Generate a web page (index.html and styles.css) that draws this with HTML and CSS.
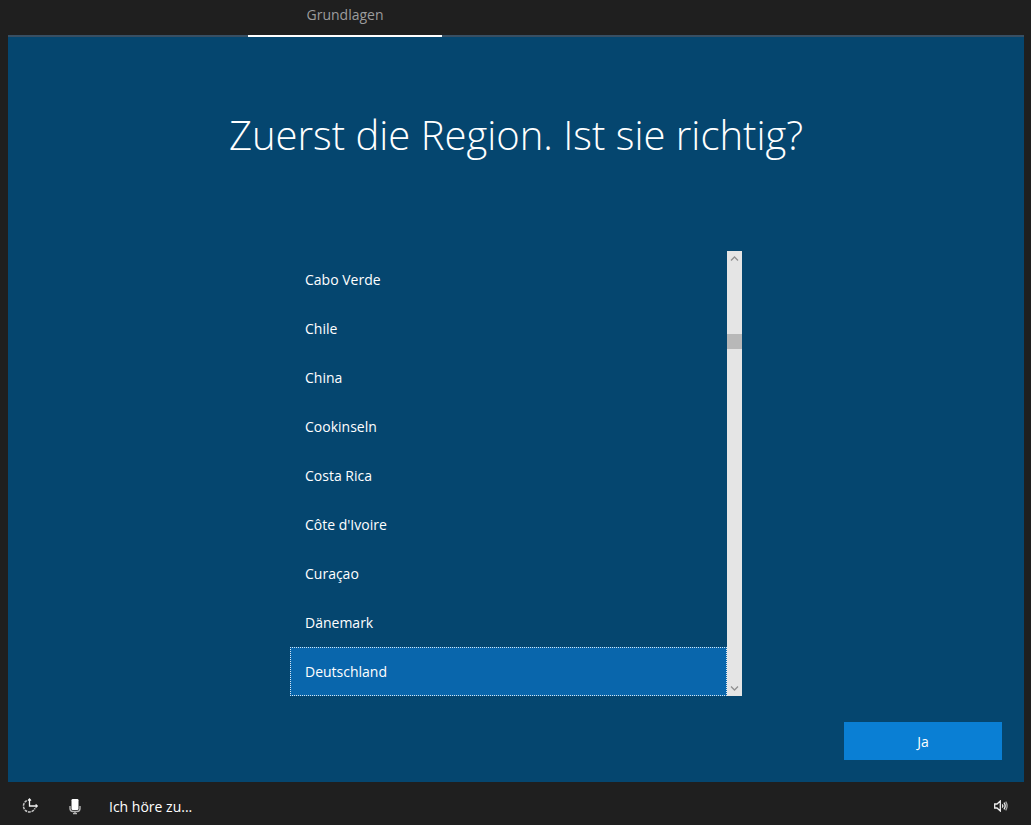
FILE: index.html
```html
<!DOCTYPE html>
<html lang="de">
<head>
<meta charset="utf-8">
<meta name="viewport" content="width=device-width, initial-scale=1">
<title>Grundlagen</title>
<link rel="stylesheet" href="styles.css">
</head>
<body>
<div class="setup">
  <header class="steps">
    <a class="step" href="#grundlagen" aria-current="step">Grundlagen</a>
  </header>
  <main class="panel" id="grundlagen">
    <h1 class="title">Zuerst die Region. Ist sie richtig?</h1>
    <div class="picker">
      <div class="regions" role="listbox" aria-label="Region">
        <button class="region" type="button" role="option">Cabo Verde</button>
        <button class="region" type="button" role="option">Chile</button>
        <button class="region" type="button" role="option">China</button>
        <button class="region" type="button" role="option">Cookinseln</button>
        <button class="region" type="button" role="option">Costa Rica</button>
        <button class="region" type="button" role="option">Côte d'Ivoire</button>
        <button class="region" type="button" role="option">Curaçao</button>
        <button class="region" type="button" role="option">Dänemark</button>
        <button class="region region-selected" type="button" role="option" aria-selected="true">Deutschland</button>
      </div>
      <div class="scrollbar">
        <button class="scroll-button" type="button" aria-label="Nach oben">
          <svg width="9" height="5" viewBox="0 0 9 5"><path d="M1 4.5 4.500 1 8 4.500"/></svg>
        </button>
        <div class="track"><div class="thumb"></div></div>
        <button class="scroll-button" type="button" aria-label="Nach unten">
          <svg width="9" height="5" viewBox="0 0 9 5"><path d="M1 .5 4.500 4 8 .5"/></svg>
        </button>
      </div>
    </div>
    <div class="actions">
      <button class="confirm" type="button">Ja</button>
    </div>
  </main>
  <footer class="bar">
    <button class="tool" type="button" aria-label="Erleichterte Bedienung">
      <svg width="18" height="16" viewBox="0 0 18 16" fill="none" stroke="#f2f2f2" stroke-width="1.300">
        <path d="M5.800 2.600A6 6 0 1 0 14 10.300" stroke="#c4c4c4" stroke-width="1.500" stroke-dasharray="2.800 .8"/>
        <path d="M8.500 1v7H16"/>
        <path d="M7 2.600 8.500 1 10 2.600M14.600 6.500 16.200 8l-1.600 1.500"/>
      </svg>
    </button>
    <button class="tool" type="button" aria-label="Mikrofon">
      <svg width="12" height="17" viewBox="0 0 12 17">
        <rect x="2.500" y="1" width="7" height="11" rx="1.200" fill="#fff"/>
        <path d="M1 8v2.500a3 3 0 0 0 3 3h4a3 3 0 0 0 3-3V8M6 13.500V16M4 15.600h4" fill="none" stroke="#b5b5b5" stroke-width="1.400"/>
      </svg>
    </button>
    <p class="status">Ich höre zu...</p>
    <button class="tool tool-volume" type="button" aria-label="Lautstärke">
      <svg width="14" height="12" viewBox="0 0 14 12" fill="none" stroke="#f0f0f0" stroke-width="1.300">
        <path d="M.7 4h2.300L6.300 1v10L3 8H.7z"/>
        <path d="M8.300 4.300q1.300 1.700 0 3.400M10 2.700q2.400 3.300 0 6.600"/>
        <path d="M11.700 1.600q2.800 4.400 0 8.800" stroke="#aaa"/>
      </svg>
    </button>
  </footer>
</div>
</body>
</html>
```
FILE: styles.css
```css
* {
  box-sizing: border-box;
}

body {
  margin: 0;
  background: #1f1f1f;
  color: #fff;
  font-family: "Open Sans", "Noto Sans", sans-serif;
  font-size: 14px;
}

button {
  border: 0;
  padding: 0;
  background: none;
  color: inherit;
  font: inherit;
}

svg {
  display: block;
}

.setup {
  display: flex;
  flex-direction: column;
  min-height: 100vh;
  padding: 0 7px 0 8px;
}

.steps {
  display: flex;
  padding-left: 240px;
  background: linear-gradient(#384f63, #384f63) bottom / 100% 2px no-repeat;
}

.step {
  width: 194px;
  padding: 5px 0 10px;
  border-bottom: 2px solid #fff;
  color: #9c9c9c;
  line-height: 20px;
  text-align: center;
  text-decoration: none;
}

.panel {
  display: flex;
  flex: 1;
  flex-direction: column;
  padding: 68px 22px 22px;
  background: #05466f;
}

.title {
  margin: 0;
  font-size: 40px;
  font-weight: 300;
  line-height: 60px;
  text-align: center;
}

.picker {
  display: flex;
  width: 100%;
  max-width: 452px;
  margin: 86px auto 26px;
}

.regions {
  flex: 1;
  padding-top: 4px;
}

.region {
  display: block;
  width: 100%;
  height: 49px;
  padding: 0 14px;
  border: 1px solid transparent;
  text-align: left;
}

.region-selected {
  border: 1px dotted #d5e6f3;
  background: #0966ac;
}

.scrollbar {
  display: flex;
  flex-direction: column;
  width: 15px;
  background: #e5e5e5;
}

.scroll-button {
  display: flex;
  align-items: center;
  justify-content: center;
  height: 15px;
}

.scroll-button path {
  fill: none;
  stroke: #909090;
  stroke-width: 1.3;
}

.track {
  flex: 1;
  padding-top: 68px;
}

.thumb {
  height: 15px;
  background: #b8b8b8;
}

.actions {
  display: flex;
  justify-content: flex-end;
  margin-top: auto;
}

.confirm {
  width: 158px;
  height: 38px;
  background: #0a7fd4;
}

.bar {
  display: flex;
  align-items: center;
  height: 43px;
  padding: 5px 16px 0 13px;
}

.tool-volume {
  margin-left: auto;
}

.tool + .tool {
  margin-left: 30px;
}

.status {
  margin: 0 0 0 28px;
}
```
